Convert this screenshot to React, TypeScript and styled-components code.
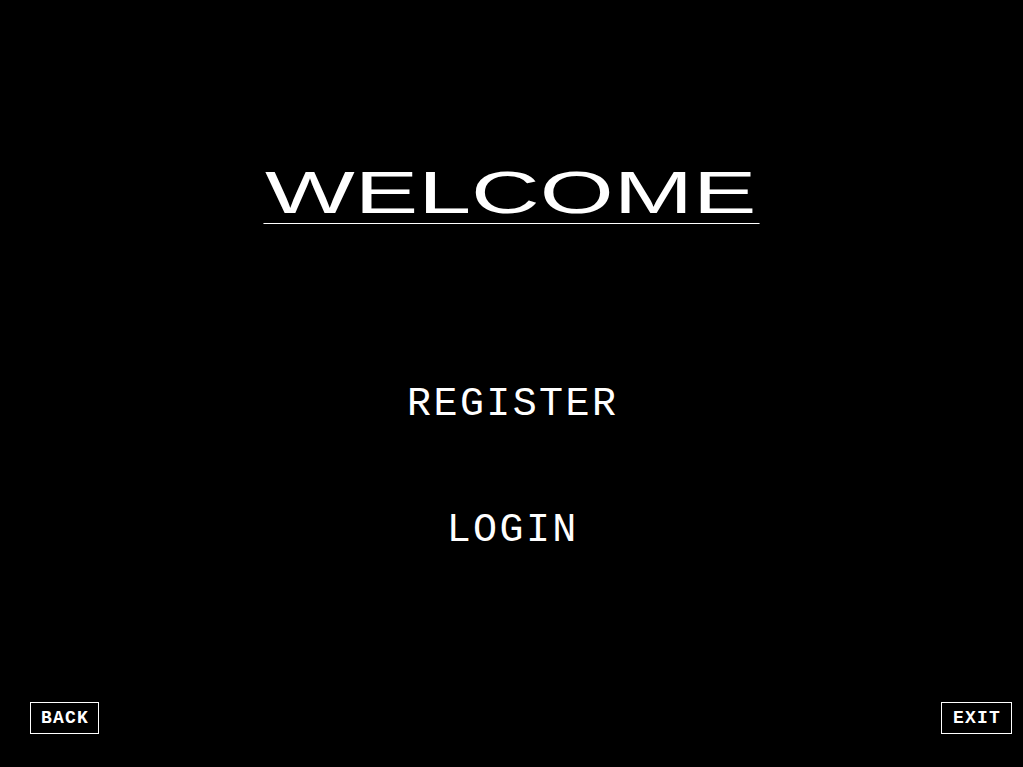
import React from "react";
import styled, { createGlobalStyle } from "styled-components";

const Global = createGlobalStyle`
  html, body { margin: 0; padding: 0; background: #000; }
  #root { width: 100%; }
`;

const MONO = `"Courier New", "Nimbus Mono PS", FreeMono, Courier, "Liberation Mono", monospace`;

const Screen = styled.div`
  width: 100%;
  height: 767px;
  background: #000;
  color: #fff;
  display: flex;
  flex-direction: column;
  align-items: center;
  box-sizing: border-box;
`;

const TitleWrap = styled.div`
  margin-top: 163px;
  display: flex;
  justify-content: center;
  width: 100%;
`;

const Title = styled.h1`
  margin: 0;
  font-family: "Liberation Sans", Arial, sans-serif;
  font-weight: normal;
  font-size: 60px;
  line-height: 60px;
  width: 313px;
  text-align: left;
  border-bottom: 1px solid #fff;
  transform: scaleX(1.585);
  transform-origin: center;
  padding-left: 1px;
  box-sizing: border-box;
`;

const Menu = styled.nav`
  margin-top: 159px;
  display: flex;
  flex-direction: column;
  align-items: center;
  gap: 82px;
`;

const MenuItem = styled.a`
  font-family: ${MONO};
  font-size: 40px;
  letter-spacing: 2.4px;
  margin-right: -2.4px;
  line-height: 44px;
  color: #fff;
  text-decoration: none;
  cursor: pointer;
`;

const Footer = styled.div`
  margin-top: auto;
  width: 100%;
  box-sizing: border-box;
  display: flex;
  justify-content: space-between;
  padding: 0 11px 33px 30px;
`;

const NavButton = styled.button<{ $w: number }>`
  background: #000;
  color: #fff;
  border: 1px solid #fff;
  font-family: ${MONO};
  font-weight: bold;
  font-size: 18px;
  letter-spacing: 1.2px;
  height: 32px;
  width: ${(p) => p.$w}px;
  padding: 0 0 0 1px;
  display: flex;
  align-items: center;
  justify-content: center;
  cursor: pointer;
`;

export default function App() {
  return (
    <>
      <Global />
      <Screen>
        <TitleWrap>
          <Title>WELCOME</Title>
        </TitleWrap>
        <Menu>
          <MenuItem>REGISTER</MenuItem>
          <MenuItem>LOGIN</MenuItem>
        </Menu>
        <Footer>
          <NavButton $w={69}>BACK</NavButton>
          <NavButton $w={71}>EXIT</NavButton>
        </Footer>
      </Screen>
    </>
  );
}
